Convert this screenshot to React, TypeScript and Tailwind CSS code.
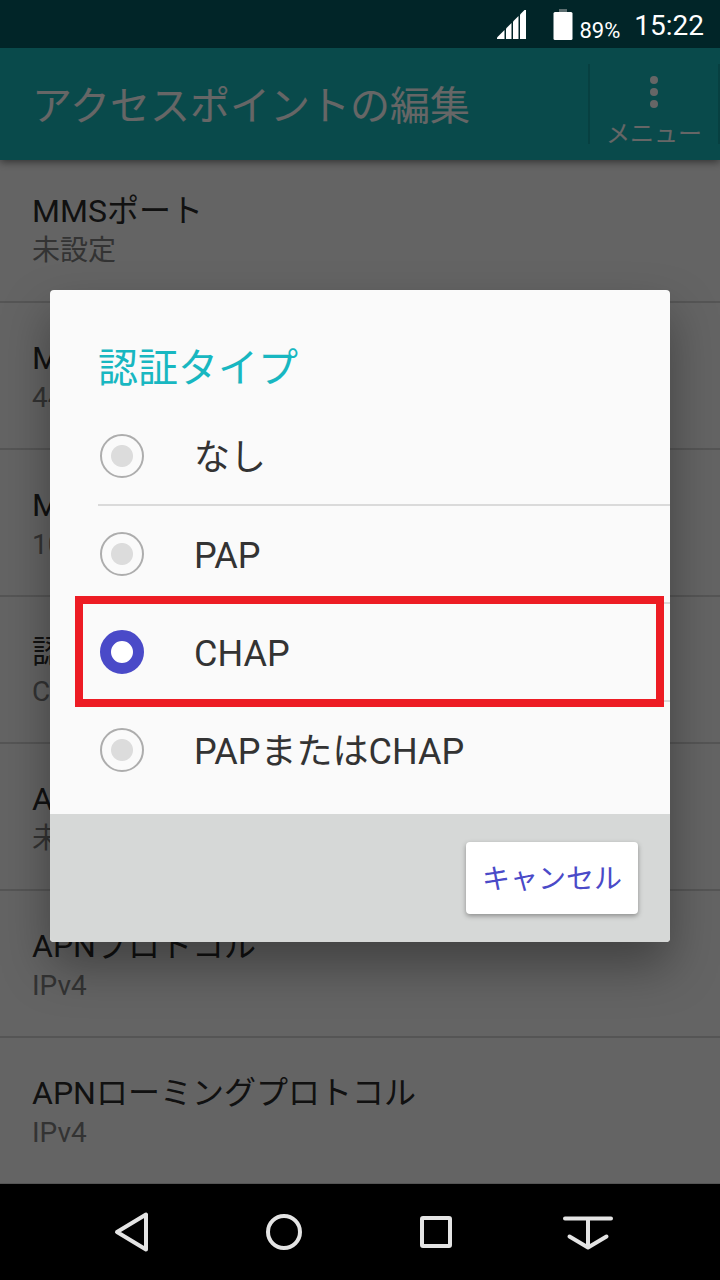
import React, { useState } from 'react'

const settings = [
  { title: 'MMSポート', value: '未設定' },
  { title: 'MCC', value: '440' },
  { title: 'MNC', value: '10' },
  { title: '認証タイプ', value: 'CHAP' },
  { title: 'APNタイプ', value: '未設定' },
  { title: 'APNプロトコル', value: 'IPv4' },
  { title: 'APNローミングプロトコル', value: 'IPv4' },
]

const authTypes = ['なし', 'PAP', 'CHAP', 'PAPまたはCHAP']

const StatusBar = () => (
  <div className="flex h-12 shrink-0 items-center justify-end bg-[#012528] pr-4 text-white">
    {/* Signal */}
    <svg className="mr-6 h-8 w-8" viewBox="0 0 32 32" fill="currentColor">
      <path d="M0 31V29.5L7.5 22V31Z" />
      <path d="M9 31V20.5L14.5 15V31Z" />
      <path d="M16 31V13.5L21.5 8V31Z" />
      <path d="M23 31V6.5L27.5 2H29V31Z" />
    </svg>
    {/* Battery */}
    <svg className="mr-1.5 h-8 w-5" viewBox="0 0 20 32">
      <path d="M6 1h8v3h-8z" fill="#5c6e70" />
      <rect x="0.5" y="4" width="19" height="28" rx="1.5" fill="currentColor" />
    </svg>
    <span className="mr-3.5 pt-3.5 text-[22px] leading-6">89%</span>
    <span className="pt-1 text-[28px] leading-8">15:22</span>
  </div>
)

const Header = () => (
  <header className="relative z-10 flex h-28 shrink-0 items-center bg-[#17b9bc] pl-8 text-white shadow-[0_2px_8px_rgba(0,0,0,0.5)]">
    <h1 className="flex-1 pt-1.5 text-[40px] leading-[56px]">アクセスポイントの編集</h1>
    <button className="flex h-20 w-[132px] flex-col items-center gap-3 border-x-2 border-[#12a0a3] pt-3">
      <svg className="h-8 w-2 shrink-0" viewBox="0 0 8 32" fill="currentColor">
        <circle cx="4" cy="4" r="4" />
        <circle cx="4" cy="16" r="4" />
        <circle cx="4" cy="28" r="4" />
      </svg>
      <span className="pt-0.5 text-2xl leading-6">メニュー</span>
    </button>
  </header>
)

const AuthDialog = () => {
  const [selected, setSelected] = useState('CHAP')

  return (
    <div
      role="dialog"
      aria-labelledby="auth-title"
      className="w-full overflow-hidden rounded bg-[#fafafa] shadow-[0_24px_48px_rgba(0,0,0,0.35)]"
    >
      <h2 id="auth-title" className="px-12 pt-[54px] pb-3.5 text-[40px] leading-[50px] text-[#18b7c1]">
        認証タイプ
      </h2>
      <div role="radiogroup" aria-labelledby="auth-title" className="pb-4 pl-12">
        {authTypes.map((type) => (
          <label
            key={type}
            className="relative flex h-[98px] items-center border-b-2 border-[#dadada] pl-0.5 text-4xl text-[#333] last:h-24 last:border-b-0"
          >
            <input
              type="radio"
              name="auth"
              checked={selected === type}
              onChange={() => setSelected(type)}
              className="mr-[50px] h-11 w-11 shrink-0 appearance-none rounded-full border-2 border-[#adadad] bg-[radial-gradient(circle,#dcdcdc_10.5px,transparent_11.5px)] checked:border-[11px] checked:border-[#4a4ac8] checked:bg-white checked:bg-none"
            />
            <span className="pt-1">{type}</span>
            {/* Highlight frame */}
            {type === 'CHAP' && (
              <span className="pointer-events-none absolute -top-2 right-1.5 -bottom-[7px] -left-[23px] z-10 border-8 border-[#ed1c24]" />
            )}
          </label>
        ))}
      </div>
      <div className="flex justify-end bg-[#d6d8d7] px-8 py-7">
        <button className="h-[72px] rounded bg-white px-4 pt-1 text-[28px] text-[#4a4ac8] shadow-[0_2px_5px_rgba(0,0,0,0.35)]">
          キャンセル
        </button>
      </div>
    </div>
  )
}

const NavBar = () => (
  <nav className="grid h-24 shrink-0 grid-cols-4 bg-black px-14 text-[#e4e4e4]">
    <button aria-label="戻る" className="flex items-center justify-center">
      <svg className="h-14 w-14" viewBox="0 0 56 56" fill="none" stroke="currentColor" strokeWidth="4" strokeLinejoin="round">
        <path d="M13 28L42 10.5V45.5Z" />
      </svg>
    </button>
    <button aria-label="ホーム" className="flex items-center justify-center">
      <svg className="h-14 w-14" viewBox="0 0 56 56" fill="none" stroke="currentColor" strokeWidth="4">
        <circle cx="28" cy="28" r="16" />
      </svg>
    </button>
    <button aria-label="履歴" className="flex items-center justify-center">
      <svg className="h-14 w-14" viewBox="0 0 56 56" fill="none" stroke="currentColor" strokeWidth="4" strokeLinejoin="round">
        <rect x="14" y="14" width="28" height="28" rx="1" />
      </svg>
    </button>
    <button aria-label="通知" className="flex items-center justify-center">
      <svg className="h-14 w-14" viewBox="0 0 56 56" fill="none" stroke="currentColor" strokeWidth="4" strokeLinecap="round" strokeLinejoin="round">
        <path d="M5 14.5H51M28 14.5V43M9.5 32.5L28 43.5L46.5 32.5" />
      </svg>
    </button>
  </nav>
)

const App = () => {
  return (
    <div className="flex h-screen flex-col font-['Roboto','Noto_Sans_CJK_JP',sans-serif]" lang="ja">
      <StatusBar />
      <main className="relative flex min-h-0 flex-1 flex-col overflow-hidden bg-[#fafafa]">
        <Header />
        <ul className="-mt-1 min-h-0 flex-1 overflow-hidden">
          {settings.map((item) => (
            <li key={item.title} className="flex h-[147px] flex-col justify-center border-b-2 border-[#d4d4d4] px-8 pt-[5px]">
              <p className="text-[32px] leading-10 text-[#2b2b2b]">{item.title}</p>
              <p className="text-[28px] leading-10 text-[#808080]">{item.value}</p>
            </li>
          ))}
        </ul>

        {/* Dimmed backdrop with the dialog */}
        <div className="absolute inset-0 z-20 flex items-center justify-center bg-black/60 px-[50px]">
          <AuthDialog />
        </div>
      </main>
      <NavBar />
    </div>
  )
}

export default App
